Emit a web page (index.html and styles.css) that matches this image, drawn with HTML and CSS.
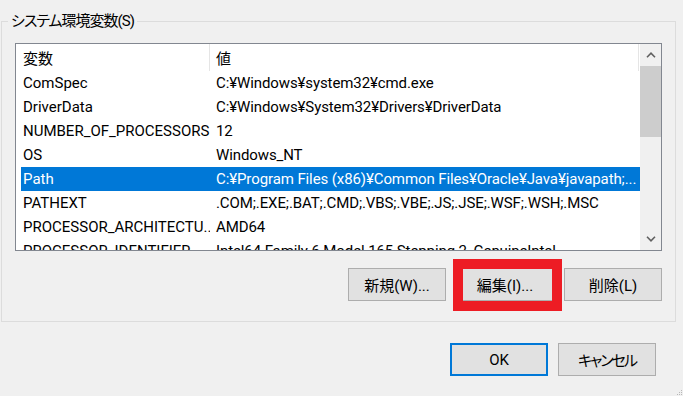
FILE: index.html
```html
<!DOCTYPE html>
<html lang="ja">
<head>
  <meta charset="UTF-8">
  <meta name="viewport" content="width=device-width, initial-scale=1.0">
  <title>環境変数</title>
  <link rel="stylesheet" href="styles.css">
</head>
<body>
  <div class="dialog">
    <fieldset class="group">
      <legend>システム環境変数(S)</legend>

      <div class="listview">
        <div class="list-body">
          <div class="list-header">
            <span class="cell name">変数</span>
            <span class="cell value">値</span>
          </div>
          <div class="row"><span class="cell name">ComSpec</span><span class="cell value">C:¥Windows¥system32¥cmd.exe</span></div>
          <div class="row"><span class="cell name">DriverData</span><span class="cell value">C:¥Windows¥System32¥Drivers¥DriverData</span></div>
          <div class="row"><span class="cell name">NUMBER_OF_PROCESSORS</span><span class="cell value">12</span></div>
          <div class="row"><span class="cell name">OS</span><span class="cell value">Windows_NT</span></div>
          <div class="row selected"><span class="cell name">Path</span><span class="cell value">C:¥Program Files (x86)¥Common Files¥Oracle¥Java¥javapath;...</span></div>
          <div class="row"><span class="cell name">PATHEXT</span><span class="cell value">.COM;.EXE;.BAT;.CMD;.VBS;.VBE;.JS;.JSE;.WSF;.WSH;.MSC</span></div>
          <div class="row"><span class="cell name">PROCESSOR_ARCHITECTU...</span><span class="cell value">AMD64</span></div>
          <div class="row"><span class="cell name">PROCESSOR_IDENTIFIER</span><span class="cell value">Intel64 Family 6 Model 165 Stepping 2, GenuineIntel</span></div>
        </div>

        <div class="scrollbar">
          <div class="sb-btn">
            <svg width="10" height="6" viewBox="0 0 10 6"><path d="M1 5.2 L5 1.2 L9 5.2" fill="none" stroke="#606060" stroke-width="1.6"/></svg>
          </div>
          <div class="sb-track">
            <div class="sb-thumb"></div>
          </div>
          <div class="sb-btn">
            <svg width="10" height="6" viewBox="0 0 10 6"><path d="M1 0.8 L5 4.8 L9 0.8" fill="none" stroke="#606060" stroke-width="1.6"/></svg>
          </div>
        </div>
      </div>

      <div class="group-buttons">
        <button class="btn">新規(W)...</button>
        <button class="btn marked">編集(I)...</button>
        <button class="btn">削除(L)</button>
      </div>
    </fieldset>

    <div class="dialog-buttons">
      <button class="btn default">OK</button>
      <button class="btn kana">キャンセル</button>
    </div>
  </div>

  <svg class="grip" width="7" height="7" viewBox="0 0 7 7">
    <rect x="5" y="1" width="1" height="1" fill="#b8b8b8"/>
    <rect x="3" y="3" width="1" height="1" fill="#b8b8b8"/>
    <rect x="5" y="3" width="1" height="1" fill="#b8b8b8"/>
    <rect x="1" y="5" width="1" height="1" fill="#b8b8b8"/>
    <rect x="3" y="5" width="1" height="1" fill="#b8b8b8"/>
    <rect x="5" y="5" width="1" height="1" fill="#b8b8b8"/>
  </svg>
</body>
</html>
```

FILE: styles.css
```css
:root {
  --dialog-bg: #f0f0f0;
  --group-border: #dcdcdc;
  --list-border: #828790;
  --select-bg: #0078d7;
  --btn-bg: #e1e1e1;
  --btn-border: #adadad;
  --text: #000000;
}

* {
  margin: 0;
  padding: 0;
  box-sizing: border-box;
  font-family: Roboto, "Noto Sans CJK JP", sans-serif;
  font-feature-settings: "palt";
}

body {
  width: 683px;
  height: 396px;
  background-color: var(--dialog-bg);
  color: var(--text);
  font-size: 15px;
  position: relative;
  overflow: hidden;
}

.dialog {
  display: flex;
  flex-direction: column;
}

/* group box */
.group {
  min-width: 0;
  margin: 11px 7px 0 1px;
  padding: 12px 13px 20px 13px;
  border: 1px solid var(--group-border);
}

.group legend {
  margin-left: -7px;
  padding: 0 3px;
  line-height: 20px;
  font-size: 15px;
  letter-spacing: -1px;
}

/* list view */
.listview {
  display: flex;
  height: 208px;
  background-color: white;
  border: 1px solid var(--list-border);
}

.list-body {
  flex: 1;
  min-width: 0;
  padding-left: 5px;
  overflow: hidden;
}

.list-header,
.row {
  display: flex;
  align-items: center;
  white-space: nowrap;
}

.list-header {
  height: 27px;
}

.list-header .cell {
  border-right: 1px solid #e5e5e5;
  height: 100%;
  display: flex;
  align-items: center;
}

.row {
  height: 24px;
}

.cell {
  overflow: hidden;
}

.cell.name {
  width: 189px;
  flex-shrink: 0;
  padding-left: 2px;
}

.cell.value {
  flex: 1;
  padding-left: 6px;
  margin-right: 1px;
  letter-spacing: -0.1px;
}

.row.selected {
  background-color: var(--select-bg);
  color: white;
}

/* scrollbar */
.scrollbar {
  width: 21px;
  flex-shrink: 0;
  display: flex;
  flex-direction: column;
  background-color: #f0f0f0;
}

.sb-btn {
  height: 22px;
  display: flex;
  align-items: center;
  justify-content: center;
}

.sb-track {
  flex: 1;
}

.sb-thumb {
  height: 71px;
  background-color: #cdcdcd;
}

/* buttons */
.btn {
  width: 98px;
  height: 33px;
  background-color: var(--btn-bg);
  border: 1px solid var(--btn-border);
  font-size: 15px;
  color: var(--text);
}

.btn.default {
  border: 2px solid var(--select-bg);
}

.btn.kana {
  letter-spacing: -2px;
}

.group-buttons {
  display: flex;
  justify-content: flex-end;
  gap: 10px;
  margin-top: 17px;
}

.btn.marked {
  position: relative;
}

/* red annotation frame */
.btn.marked::after {
  content: "";
  position: absolute;
  left: -4px;
  right: -9px;
  top: -10px;
  bottom: -11px;
  border: 10px solid #ed1c24;
}

.dialog-buttons {
  display: flex;
  justify-content: flex-end;
  gap: 10px;
  margin-top: 21px;
  padding-right: 27px;
}

.grip {
  position: absolute;
  right: 0;
  bottom: 0;
}
```
